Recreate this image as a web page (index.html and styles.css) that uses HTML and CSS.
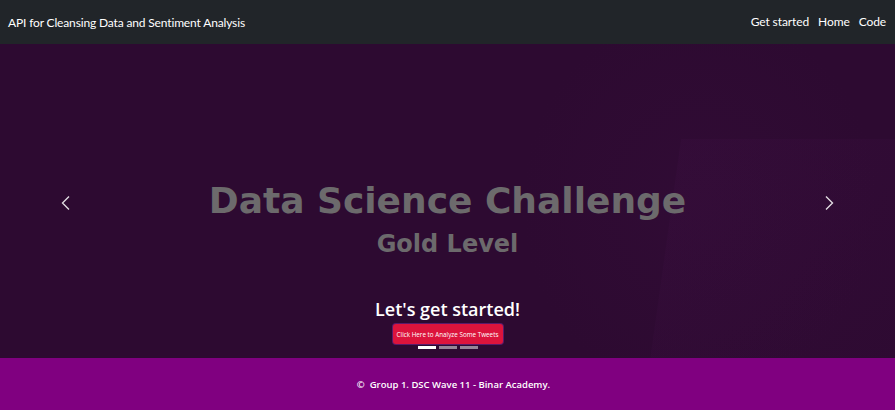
FILE: index.html
```html
<!DOCTYPE html>
<html lang="en">
<head>
<meta charset="utf-8">
<title>API for Cleansing Data and Sentiment Analysis</title>
<link rel="stylesheet" href="styles.css">
</head>
<body>
<nav class="navbar">
  <a class="brand" href="#">API for Cleansing Data and Sentiment Analysis</a>
  <ul class="nav-links">
    <li><a href="#">Get started</a></li>
    <li><a href="#">Home</a></li>
    <li><a href="#">Code</a></li>
  </ul>
</nav>
<section class="hero">
  <div class="bg-shapes">
    <div class="shape s1"></div>
    <div class="shape s2"></div>
  </div>
  <button class="ctrl prev" aria-label="Previous">
    <svg width="16" height="16" viewBox="0 0 16 16"><path d="M11 1.5 L4.5 8 L11 14.5" fill="none" stroke="#fff" stroke-width="1.4"/></svg>
  </button>
  <div class="hero-content">
    <h1 class="title">Data Science Challenge</h1>
    <h2 class="subtitle">Gold Level</h2>
    <div class="cta">
      <h3 class="cta-title">Let's get started!</h3>
      <a class="btn" href="#">Click Here to Analyze Some Tweets</a>
      <div class="indicators">
        <span class="ind active"></span>
        <span class="ind"></span>
        <span class="ind"></span>
      </div>
    </div>
  </div>
  <button class="ctrl next" aria-label="Next">
    <svg width="16" height="16" viewBox="0 0 16 16"><path d="M5 1.5 L11.5 8 L5 14.5" fill="none" stroke="#fff" stroke-width="1.4"/></svg>
  </button>
</section>
<footer class="footer">
  <p>©&nbsp; Group 1. DSC Wave 11 - Binar Academy.</p>
</footer>
</body>
</html>
```
FILE: styles.css
```css
* { box-sizing: border-box; }
html, body { margin: 0; padding: 0; }
body {
  font-family: "Lato", "Open Sans", sans-serif;
  width: 895px;
  height: 410px;
  overflow: hidden;
  display: flex;
  flex-direction: column;
}
.navbar {
  height: 44px;
  background: #212529;
  display: flex;
  align-items: center;
  justify-content: space-between;
  padding: 0 9px 0 8px;
}
.brand {
  color: #fff;
  text-decoration: none;
  font-size: 12px;
  letter-spacing: -0.15px;
  margin-top: 0;
}
.nav-links {
  list-style: none;
  margin: 0;
  padding: 0;
  display: flex;
  gap: 9px;
  margin-top: -6px;
}
.nav-links a {
  color: #fff;
  text-decoration: none;
  font-size: 12px;
  letter-spacing: -0.1px;
}
.hero {
  position: relative;
  height: 314px;
  background: #2d0a31;
  display: flex;
  align-items: stretch;
  overflow: hidden;
}
.bg-shapes { position: absolute; inset: 0; pointer-events: none; }
.shape { position: absolute; }
.s1 {
  left: 660px; top: 95px; width: 280px; height: 300px;
  background: linear-gradient(135deg, rgba(60,15,65,0.35), rgba(40,10,45,0));
  transform: skewX(-8deg);
}
.s2 {
  left: 520px; top: -40px; width: 360px; height: 400px;
  border-radius: 50%;
  background: radial-gradient(ellipse at center, rgba(55,14,60,0.35), rgba(45,10,49,0) 70%);
}
.ctrl {
  position: relative;
  width: 132px;
  background: none;
  border: 0;
  padding: 0;
  display: flex;
  align-items: center;
  justify-content: center;
  opacity: 0.85;
  padding-top: 3px;
}
.hero-content {
  flex: 1;
  position: relative;
  display: flex;
  flex-direction: column;
  align-items: center;
}
.title {
  margin: 135px 0 0 0;
  font-family: "DejaVu Sans", sans-serif;
  font-weight: bold;
  font-size: 36px;
  line-height: 44px;
  color: #6c6a6c;
  letter-spacing: 0;
}
.subtitle {
  margin: 5px 0 0 0;
  font-family: "DejaVu Sans", sans-serif;
  font-weight: bold;
  font-size: 24px;
  line-height: 32px;
  color: #6c6a6c;
}
.cta {
  margin-top: 37px;
  display: flex;
  flex-direction: column;
  align-items: center;
}
.cta-title {
  margin: 0;
  color: #fff;
  font-family: "Open Sans", sans-serif;
  font-size: 18px;
  font-weight: 600;
  line-height: 24px;
}
.btn {
  margin-top: 3px;
  background: #dc143c;
  color: #fff;
  font-family: "Open Sans", sans-serif;
  font-size: 6.3px;
  white-space: nowrap;
  text-decoration: none;
  height: 20px;
  width: 110px;
  display: flex;
  align-items: center;
  justify-content: center;
  border-radius: 3px;
  box-shadow: 0 0 0 1px #5a1a6a;
}
.indicators {
  display: flex;
  gap: 3px;
  margin-top: 2px;
}
.ind {
  width: 18px;
  height: 3px;
  background: #fff;
  opacity: 0.5;
}
.ind.active { opacity: 1; }
.footer {
  flex: 1;
  background: #800080;
  display: flex;
  align-items: center;
  justify-content: center;
}
.footer p {
  margin: 0 0 0 12px;
  color: #fff;
  font-family: "Open Sans", sans-serif;
  font-size: 9.5px;
  font-weight: 600;
  margin-top: 1px;
}
```
